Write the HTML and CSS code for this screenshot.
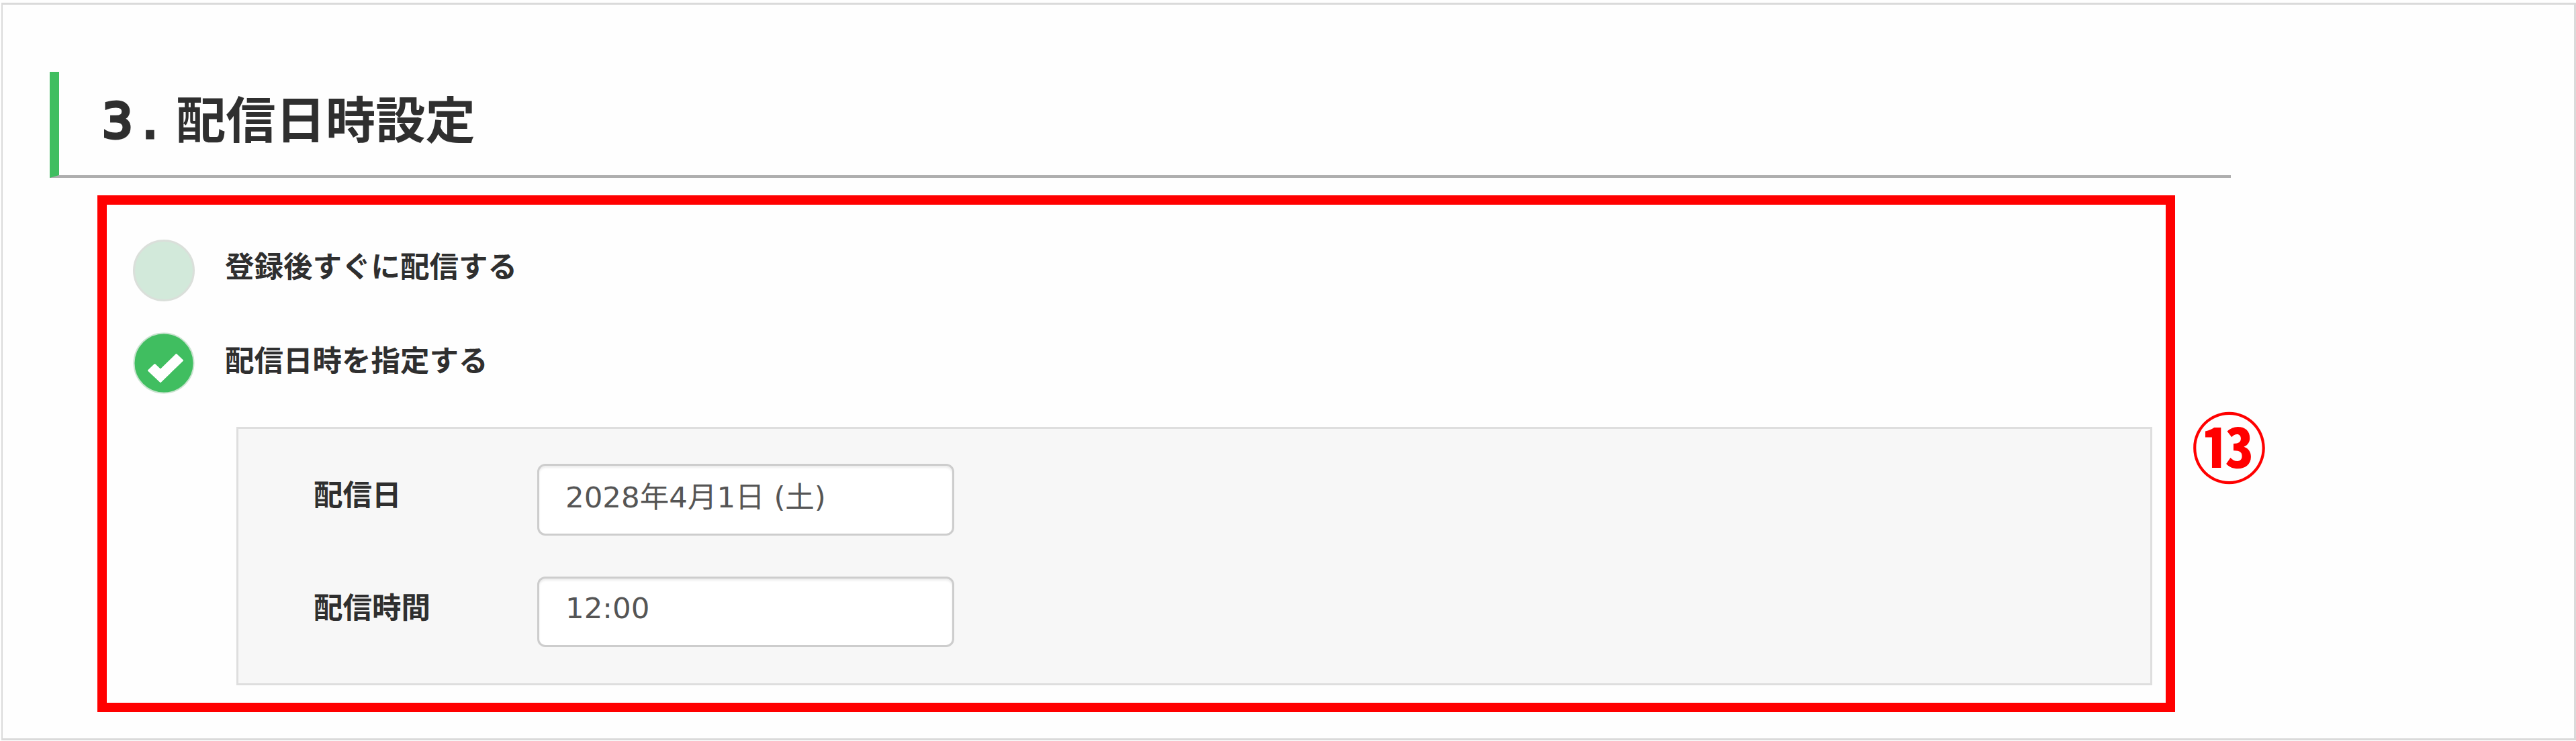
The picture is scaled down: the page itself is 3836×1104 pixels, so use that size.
FILE: index.html
```html
<!DOCTYPE html>
<html lang="ja">
<head>
<meta charset="utf-8">
<title>配信日時設定</title>
<link rel="stylesheet" href="styles.css">
</head>
<body>
<main class="page">
  <h2 class="heading"><span class="heading-no">3</span><span class="heading-dot">.</span><span class="heading-text">配信日時設定</span></h2>
  <div class="row">
    <section class="frame">
      <div class="option option-first">
        <span class="radio"></span>
        <span class="option-label">登録後すぐに配信する</span>
      </div>
      <div class="option option-second">
        <svg class="check" viewBox="0 0 92 92" width="92" height="92">
          <circle cx="46" cy="46" r="44.5" fill="#40be60" stroke="#c9e3cf" stroke-width="2"/>
          <path d="M23 57L32.5 48L41 56L64.5 33L74 42L41 74Z" fill="#fff" stroke="#fff" stroke-width="2" stroke-linejoin="round"/>
        </svg>
        <span class="option-label">配信日時を指定する</span>
      </div>
      <div class="panel">
        <div class="field field-date">
          <span class="field-label">配信日</span>
          <div class="input"><span class="value">2028年4月1日 (土)</span></div>
        </div>
        <div class="field field-time">
          <span class="field-label">配信時間</span>
          <div class="input"><span class="value">12:00</span></div>
        </div>
      </div>
    </section>
    <span class="callout">⑬</span>
  </div>
</main>
</body>
</html>
```
FILE: styles.css
```css
* { box-sizing: border-box; }
body {
  margin: 0;
  background: #fefefe;
  color: #2f2f2f;
  font-family: "Noto Sans CJK JP", sans-serif;
}
.page {
  width: 3834px;
  height: 1099px;
  margin: 4px 0 0 2px;
  border: 3px solid #dadada;
  border-left-width: 2px;
  padding: 100px 0 0 70px;
}
.heading {
  display: flex;
  width: 3248px;
  height: 158px;
  margin: 0 0 26px;
  padding-left: 64px;
  border-left: 14px solid #40be60;
  border-bottom: 4px solid #aeaeae;
  font-size: 74.3px;
  font-weight: 700;
  line-height: 133px;
  white-space: nowrap;
}
.heading-no, .heading-dot {
  font-family: "DejaVu Sans", sans-serif;
  font-size: 72px;
  font-weight: 400;
  line-height: 147px;
  -webkit-text-stroke: 5px #2f2f2f;
}
.heading-no { width: 60px; }
.heading-dot { width: 50px; }
.row { display: flex; }
.frame {
  width: 3094px;
  height: 770px;
  margin-left: 71px;
  border: 14px solid #f00;
  padding: 52px 0 0 39px;
}
.option { display: flex; height: 92px; gap: 45px; }
.option-second { margin-top: 46px; }
.option-label { font-size: 43.5px; font-weight: 700; line-height: 76px; white-space: nowrap; }
.option-second .option-label { line-height: 80px; }
.radio {
  width: 92px;
  height: 92px;
  border: 3px solid #dadfda;
  border-radius: 50%;
  background: #d2e9da;
}
.panel {
  width: 2853px;
  height: 385px;
  margin: 49px 0 0 154px;
  border: 3px solid #dedede;
  background: #f7f7f7;
  padding: 52px 0 0 112px;
}
.field { display: flex; }
.field-date { height: 107px; margin-bottom: 61px; }
.field-time { height: 105px; }
.field-label { width: 333px; font-size: 43.5px; font-weight: 700; line-height: 88px; }
.input {
  width: 621px;
  border: 3px solid #cdcdcd;
  border-radius: 12px;
  background: #fff;
  box-shadow: inset 0 3px 3px #eee;
  padding-left: 39px;
}
.value {
  font-family: "DejaVu Sans", "Noto Sans CJK JP", sans-serif;
  font-size: 43.5px;
  letter-spacing: 0;
  line-height: 94px;
  color: #555;
  white-space: pre;
}
.field-time .value { line-height: 89px; }
.callout {
  margin: 310px 0 0 24px;
  font-size: 113px;
  font-weight: 700;
  line-height: 120px;
  color: #f00;
}
```
